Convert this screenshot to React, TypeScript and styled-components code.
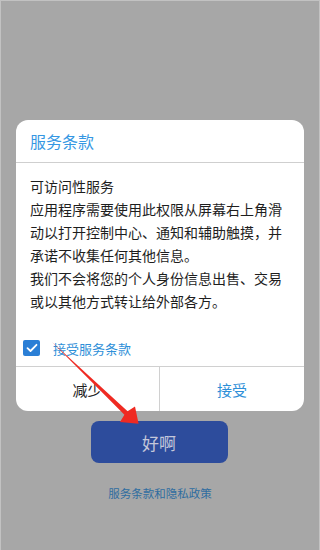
import React from "react";
import styled, { createGlobalStyle } from "styled-components";

const Global = createGlobalStyle`
  html, body { margin: 0; padding: 0; background: #a7a7a7; }
  * { box-sizing: border-box; }
  body { font-family: "Noto Sans CJK SC", "Noto Sans", sans-serif; }
`;

const Page = styled.div`
  position: relative;
  width: 320px;
  height: 550px;
  background: #a7a7a7;
  border: 1px solid #c2c2c2;
  border-bottom: none;
  display: flex;
  flex-direction: column;
  align-items: center;
  padding-top: 119px;
  overflow: hidden;
`;

const Card = styled.div`
  width: 288px;
  background: #ffffff;
  border-radius: 12px;
  overflow: hidden;
  display: flex;
  flex-direction: column;
`;

const Title = styled.div`
  height: 43px;
  display: flex;
  align-items: center;
  padding-left: 14px;
  font-size: 16px;
  color: #3597e3;
  border-bottom: 1px solid #cfcfcf;
`;

const Body = styled.div`
  padding: 12px 14px 0 14px;
  font-size: 14px;
  line-height: 23px;
  color: #1e1e1e;
`;

const Line = styled.div`
  white-space: nowrap;
`;

const CheckRow = styled.label`
  display: flex;
  align-items: center;
  gap: 13px;
  margin-top: 27px;
  padding: 0 0 10px 7px;
  font-size: 13px;
  color: #2e8fd8;
  height: 26px;
`;

const Box = styled.span`
  width: 17px;
  height: 16px;
  border-radius: 2px;
  background: #2b7fd6;
  display: flex;
  align-items: center;
  justify-content: center;
`;

const Actions = styled.div`
  display: grid;
  grid-template-columns: 1fr 1fr;
  border-top: 1px solid #d0d0d0;
  height: 45px;
`;

const Action = styled.div<{ $primary?: boolean; $divider?: boolean }>`
  display: flex;
  align-items: center;
  justify-content: center;
  font-size: 15px;
  color: ${(p) => (p.$primary ? "#2e8fd8" : "#1e1e1e")};
  border-right: ${(p) => (p.$divider ? "1px solid #d0d0d0" : "none")};
`;

const OkButton = styled.div`
  margin-top: 10px;
  margin-left: -2px;
  width: 137px;
  height: 42px;
  border-radius: 8px;
  background: #2d4c9c;
  color: #c3c7da;
  font-size: 17px;
  display: flex;
  align-items: center;
  justify-content: center;
`;

const PolicyLink = styled.div`
  margin-top: 22px;
  font-size: 11.5px;
  color: #2f6da0;
`;

const Arrow = styled.svg`
  position: absolute;
  left: -1px;
  top: -1px;
  width: 320px;
  height: 550px;
  pointer-events: none;
`;

export default function App() {
  return (
    <>
      <Global />
      <Page>
        <Card>
          <Title>服务条款</Title>
          <Body>
            <Line>可访问性服务</Line>
            <Line>应用程序需要使用此权限从屏幕右上角滑</Line>
            <Line>动以打开控制中心、通知和辅助触摸，并</Line>
            <Line>承诺不收集任何其他信息。</Line>
            <Line>我们不会将您的个人身份信息出售、交易</Line>
            <Line>或以其他方式转让给外部各方。</Line>
          </Body>
          <CheckRow>
            <Box>
              <svg width="12" height="10" viewBox="0 0 12 10">
                <path d="M1.5 5.2 L4.5 8 L10.5 1.8" fill="none" stroke="#fff" strokeWidth="1.8" strokeLinecap="round" strokeLinejoin="round" />
              </svg>
            </Box>
            <span>接受服务条款</span>
          </CheckRow>
          <Actions>
            <Action $divider>减少</Action>
            <Action $primary>接受</Action>
          </Actions>
        </Card>
        <OkButton>好啊</OkButton>
        <PolicyLink>服务条款和隐私政策</PolicyLink>
        <Arrow viewBox="0 0 320 550">
          <polygon
            points="52,342 127.6,411.3 135,406.5 138.6,423.8 120,422 124.4,414.7"
            fill="#ef2a22"
          />
        </Arrow>
      </Page>
    </>
  );
}
